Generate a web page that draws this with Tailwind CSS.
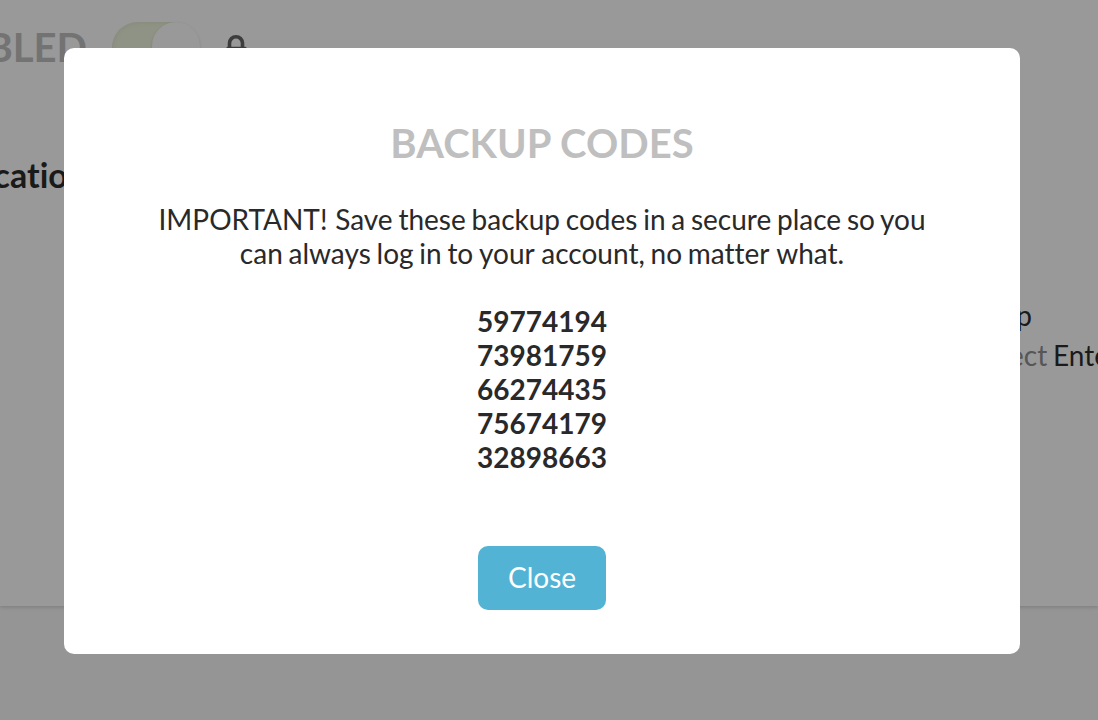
<!DOCTYPE html>
<html lang="en"><head><meta charset="utf-8"><title>Backup codes</title>
<script src="https://cdn.jsdelivr.net/npm/@tailwindcss/browser@4"></script></head>
<body class="relative h-[720px] w-[1098px] overflow-hidden bg-[#959595] font-['Lato',sans-serif] text-[28px] leading-[34px] text-[#1a1a1a] [font-variant-ligatures:none] [word-spacing:-1.4px]">
<main class="relative h-[606px] bg-[#999999] shadow-[0_1px_4px_rgba(0,0,0,0.18)]">
<div class="absolute right-[1011px] top-[23px] whitespace-nowrap text-[40px] font-bold leading-[48px] text-[#737373]">ENABLED</div>
<div class="absolute left-[112px] top-[22px] h-[52px] w-[88px] rounded-full bg-[#8f9386] shadow-[inset_0_0_4px_1px_#868b7a]"><div class="absolute right-0 top-0 h-[52px] w-[48px] rounded-full bg-[#999] shadow-[0_1px_3px_rgba(0,0,0,0.12)]"></div></div>
<svg class="absolute left-[224px] top-[34px]" width="24" height="28" viewBox="0 0 24 28" fill="none" stroke="#3d3d3d" stroke-width="3.6"><path d="M5.5 14V9.2a6.5 6.5 0 0 1 13 0V14"/><rect x="2.2" y="12.8" width="20.5" height="14" rx="1.5" fill="#3d3d3d" stroke="none"/></svg>
<div class="absolute right-[1011px] top-[154px] whitespace-nowrap text-[34px] font-bold leading-[41px]">Authentication</div>
<div class="absolute right-[66px] top-[298px] whitespace-nowrap">Set up</div>
<div class="absolute left-[1009px] top-[338px] whitespace-nowrap"><span class="text-[#565656]">ect</span> Enter</div>
</main>
<section role="dialog" class="absolute left-16 top-12 flex h-[606px] w-[956px] flex-col items-center rounded-[10px] bg-white text-center text-[#29292a]">
<h1 class="mt-[71px] text-[40px] font-bold leading-[48px] text-[#bfbfbf] [word-spacing:0]">BACKUP CODES</h1>
<p class="mt-[35px] whitespace-nowrap"><span class="[word-spacing:0.6px]">IMPORTANT! </span>Save these backup codes in a secure place so you<br>can always log in to <span class="[word-spacing:0]">your </span>account, no <span class="[word-spacing:0]">matter </span>what.</p>
<div class="mt-[34px] font-bold">59774194<br>73981759<br>66274435<br>75674179<br>32898663</div>
<button class="mt-[72px] h-16 w-32 rounded-[10px] bg-[#52b3d4] pb-0.5 text-white">Close</button>
</section>
</body></html>
